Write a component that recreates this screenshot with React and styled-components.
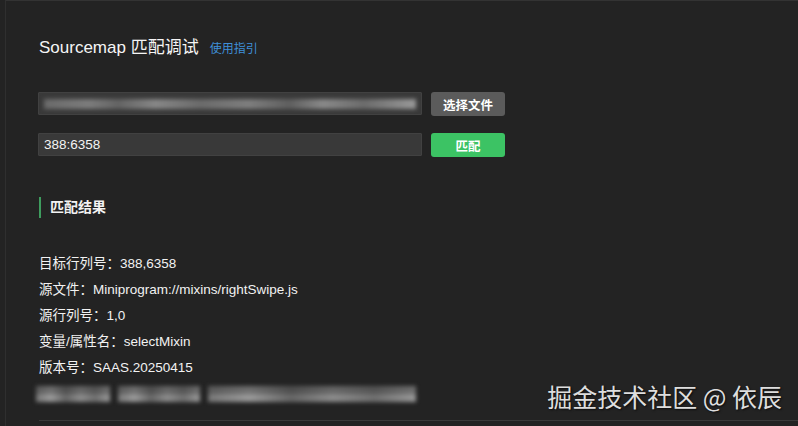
import styled, { createGlobalStyle } from 'styled-components';

const GlobalStyle = createGlobalStyle`
  html, body {
    margin: 0;
    padding: 0;
    background: #232323;
  }
  body {
    font-family: 'Liberation Sans', 'Noto Sans CJK SC', sans-serif;
    color: #f2f2f2;
  }
`;

const results = [
  { label: '目标行列号', value: '388,6358' },
  { label: '源文件', value: 'Miniprogram://mixins/rightSwipe.js' },
  { label: '源行列号', value: '1,0' },
  { label: '变量/属性名', value: 'selectMixin' },
  { label: '版本号', value: 'SAAS.20250415' },
];

const App = () => {
  return (
    <>
      <GlobalStyle />
      <Page>
        <Panel>
          <Header>
            <h1>Sourcemap 匹配调试</h1>
            <a href="#guide">使用指引</a>
          </Header>

          <FormRow>
            <Field $blurred>
              <BlurText />
            </Field>
            <Button>选择文件</Button>
          </FormRow>
          <FormRow $gap={17}>
            <Field>388:6358</Field>
            <Button $primary>匹配</Button>
          </FormRow>

          <SectionTitle>匹配结果</SectionTitle>

          <ResultList>
            {results.map((r) => (
              <li key={r.label}>
                {r.label}：{r.value}
              </li>
            ))}
          </ResultList>

          {/* blurred extra line */}
          <BlurRow>
            <BlurBlock $w={74} />
            <BlurBlock $w={82} />
            <BlurBlock $w={208} />
          </BlurRow>

          <Divider />
        </Panel>
        <Watermark>掘金技术社区 @ 依辰</Watermark>
      </Page>
    </>
  );
};

const Page = styled.div`
  position: relative;
  height: 426px;
  overflow: hidden;
  background: #232323;
`;

const Panel = styled.div`
  margin-left: 5px;
  height: 426px;
  box-sizing: border-box;
  border-left: 1px solid #2f2f2f;
  border-top: 1px solid #333;
  padding: 35px 0 0 33px;
`;

const Header = styled.div`
  display: flex;
  align-items: baseline;
  gap: 11px;
  height: 24px;

  h1 {
    margin: 0;
    font-size: 17px;
    font-weight: 400;
    line-height: 24px;
    color: #f5f5f5;
  }

  a {
    font-size: 12px;
    color: #3f8fd8;
    text-decoration: none;
  }
`;

const FormRow = styled.div`
  display: flex;
  gap: 9px;
  margin: ${(p) => p.$gap ?? 32}px 0 0 -1px;
`;

const Field = styled.div`
  width: 384px;
  height: 23px;
  box-sizing: border-box;
  background: #393939;
  border: 1px solid #414141;
  border-radius: 1px;
  padding: 0 5px;
  font-size: 13.5px;
  line-height: 21px;
  color: #f4f4f4;
  overflow: hidden;
`;

const BlurText = styled.div`
  height: 10px;
  margin-top: 6px;
  background: linear-gradient(
    90deg,
    #6a6a6a 0%,
    #7d7d7d 12%,
    #646464 20%,
    #888 30%,
    #6b6b6b 42%,
    #7f7f7f 55%,
    #5f5f5f 66%,
    #8a8a8a 75%,
    #6c6c6c 86%,
    #9a9a9a 100%
  );
  filter: blur(2px);
`;

const Button = styled.button`
  width: 74px;
  height: 24px;
  border: none;
  border-radius: 3px;
  background: ${(p) => (p.$primary ? '#3cc364' : '#5b5b5b')};
  color: #fff;
  font-family: inherit;
  font-size: 12.5px;
  font-weight: 700;
  padding: 0;
  cursor: pointer;
`;

const SectionTitle = styled.h2`
  margin: 40px 0 0;
  padding-left: 9px;
  border-left: 2px solid #3e9c5e;
  font-size: 14px;
  font-weight: 700;
  line-height: 21px;
  color: #f2f2f2;
`;

const ResultList = styled.ul`
  list-style: none;
  margin: 36px 0 0;
  padding: 0;
  display: flex;
  flex-direction: column;
  gap: 6px;

  li {
    font-size: 13.5px;
    line-height: 20px;
    color: #f2f2f2;
  }
`;

const BlurRow = styled.div`
  display: flex;
  gap: 8px;
  margin: 2px 0 0 -3px;
`;

const BlurBlock = styled.div`
  width: ${(p) => p.$w}px;
  height: 16px;
  margin-top: 6px;
  background:
    linear-gradient(180deg, rgba(35, 35, 35, 0.35) 0%, rgba(35, 35, 35, 0.35) 45%, transparent 55%),
    linear-gradient(
      90deg,
      #777 0%,
      #9a9a9a 20%,
      #666 40%,
      #8c8c8c 60%,
      #6f6f6f 80%,
      #999 100%
    );
  filter: blur(2px);
`;

const Divider = styled.div`
  margin-top: 18px;
  height: 1px;
  background: #3a3a3a;
`;

const Watermark = styled.div`
  position: absolute;
  right: 16px;
  top: 379px;
  font-family: 'Noto Sans CJK SC', sans-serif;
  font-size: 25px;
  line-height: 34px;
  color: #dedede;
  text-shadow: 1px 1px 2px rgba(0, 0, 0, 0.7);
`;

export default App;
